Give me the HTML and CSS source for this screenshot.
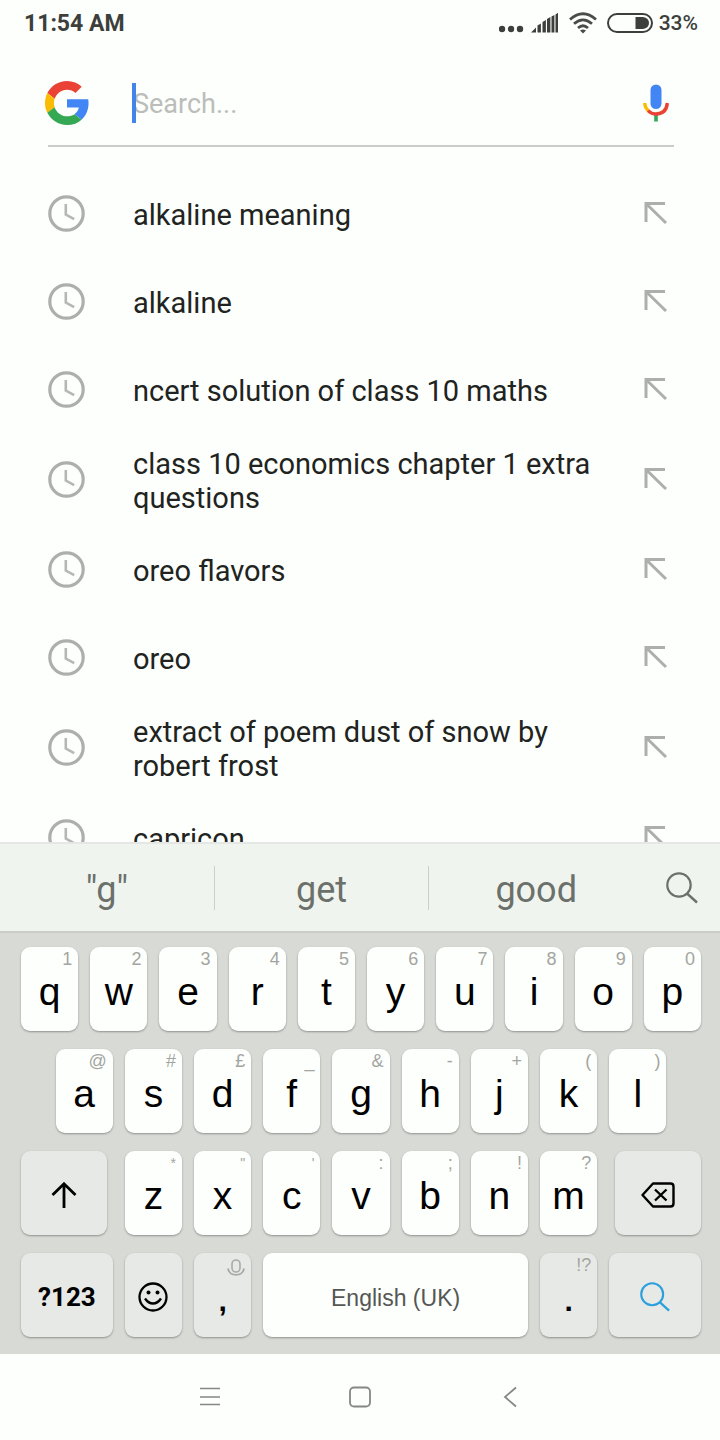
FILE: index.html
```
<!DOCTYPE html>
<html lang="en">

<head>
  <meta charset="UTF-8">
  <meta name="viewport" content="width=device-width, initial-scale=1.0">
  <title>Search</title>
  <link rel="stylesheet" href="styles.css">
</head>

<body>
  <!-- shared icons -->
  <svg class="sprite" aria-hidden="true">
    <symbol id="clock" viewBox="0 0 37 37">
      <circle cx="18.5" cy="18.5" r="16.7" fill="none" stroke="#adafac" stroke-width="3.2" />
      <path d="M17.8 9v10.6l8.4 4.6" fill="none" stroke="#b5b7b4" stroke-width="2.6" />
    </symbol>
    <symbol id="arrow" viewBox="0 0 24 24">
      <path d="M2 21V2.500H21M2.500 3L22 22" fill="none" stroke="#adafac" stroke-width="3" />
    </symbol>
    <symbol id="magnifier" viewBox="0 0 32 32">
      <circle cx="13" cy="13" r="11.700" fill="none" stroke="currentColor" stroke-width="2.200" />
      <path d="M21 21.500L31 30.500" fill="none" stroke="currentColor" stroke-width="2.400" />
    </symbol>
  </svg>

  <div class="phone">
    <header class="status-bar">
      <span class="time">11:54 AM</span>
      <svg class="dots" viewBox="0 0 26 22" width="26" height="22">
        <g fill="#3d3f3d">
          <circle cx="3" cy="17" r="3.200" />
          <circle cx="12" cy="17" r="3.200" />
          <circle cx="21" cy="17" r="3.200" />
        </g>
      </svg>
      <svg class="signal" viewBox="0 0 28 22" width="28" height="22">
        <path d="M0 20.500L5 15.500v5zM6.500 13.500l3.400-2v9H6.500zM11.500 10l3.400-2v12.500h-3.400zM16 7l3.400-2v15.500h-3.400zM20.500 4.500l2.900-1.500v17.500h-2.900zM24.500 2.500l2.500-1.800v19.800h-2.500z" fill="#3d3f3d" />
      </svg>
      <svg class="wifi" viewBox="0 0 28 22" width="28" height="22">
        <g fill="none" stroke="#4a4c4a" stroke-width="2.800">
          <path d="M1 7.500Q14 -4 27 7.500" />
          <path d="M5 11.800Q14 4 23 11.800" />
          <path d="M9 16Q14 11.600 19 16" />
        </g>
        <path d="M11 18.500Q14 16.300 17 18.500L14 21.500z" fill="#4a4c4a" />
      </svg>
      <svg class="battery" viewBox="0 0 46 22" width="46" height="22">
        <rect x="1" y="2" width="44" height="18" rx="9" fill="none" stroke="#3d3f3d" stroke-width="2" />
        <path d="M28.500 5h7.500q6 1 6 6t-6 6h-7.500z" fill="#3d3f3d" />
      </svg>
      <span class="percent">33%</span>
    </header>

    <form class="search-box">
      <span class="side-icon">
        <svg class="logo" viewBox="0 0 48 48" width="44" height="44">
          <path fill="#ea4335" d="M24 9.500c3.540 0 6.710 1.220 9.210 3.600l6.850-6.850C35.900 2.380 30.470 0 24 0 14.620 0 6.510 5.380 2.560 13.220l7.980 6.190C12.430 13.720 17.740 9.500 24 9.500z" />
          <path fill="#4285f4" d="M47.500 20H24v9.020h12.940c-.58 2.960-2.260 5.480-4.780 7.180l7.730 6c4.510-4.180 7.610-10.360 7.610-17.650 0-1.570-.15-3.090-.38-4.550z" />
          <path fill="#fbbc05" d="M10.530 28.590c-.48-1.450-.76-2.990-.76-4.590s.27-3.140.76-4.590l-7.980-6.190C.92 16.460 0 20.120 0 24c0 3.880.92 7.540 2.560 10.780l7.970-6.190z" />
          <path fill="#34a853" d="M24 48c6.480 0 11.930-2.130 15.890-5.810l-7.730-6c-2.150 1.450-4.920 2.300-8.160 2.300-6.260 0-11.570-4.220-13.470-9.910l-7.980 6.190C6.510 42.620 14.620 48 24 48z" />
        </svg>
      </span>
      <div class="search-field">
        <span class="caret"></span>
        <input class="search-input" type="text" placeholder="Search..." aria-label="Search">
      </div>
      <button class="side-icon" type="button" aria-label="Voice search">
        <svg viewBox="0 0 28 38" width="28" height="38">
          <rect x="8.500" y="0.500" width="11" height="24.500" rx="5.500" fill="#4285f4" />
          <path d="M12.200 30h3.600v7.500h-3.600z" fill="#34a853" />
          <path d="M2.700 19q.3 5 3.800 8" fill="none" stroke="#fbbc05" stroke-width="3.400" />
          <path d="M6 26.600Q9.500 30 14 30 24.500 29.500 25.300 19" fill="none" stroke="#ea4335" stroke-width="3.400" />
        </svg>
      </button>
    </form>

    <ul class="history">
      <li class="history-item">
        <svg class="clock"><use href="#clock" /></svg>
        <a class="query" href="#">alkaline meaning</a>
        <button class="side-icon" aria-label="Fill in"><svg class="arrow"><use href="#arrow" /></svg></button>
      </li>
      <li class="history-item">
        <svg class="clock"><use href="#clock" /></svg>
        <a class="query" href="#">alkaline</a>
        <button class="side-icon" aria-label="Fill in"><svg class="arrow"><use href="#arrow" /></svg></button>
      </li>
      <li class="history-item">
        <svg class="clock"><use href="#clock" /></svg>
        <a class="query" href="#">ncert solution of class 10 maths</a>
        <button class="side-icon" aria-label="Fill in"><svg class="arrow"><use href="#arrow" /></svg></button>
      </li>
      <li class="history-item">
        <svg class="clock"><use href="#clock" /></svg>
        <a class="query" href="#">class 10 economics chapter 1 extra questions</a>
        <button class="side-icon" aria-label="Fill in"><svg class="arrow"><use href="#arrow" /></svg></button>
      </li>
      <li class="history-item">
        <svg class="clock"><use href="#clock" /></svg>
        <a class="query" href="#">oreo flavors</a>
        <button class="side-icon" aria-label="Fill in"><svg class="arrow"><use href="#arrow" /></svg></button>
      </li>
      <li class="history-item">
        <svg class="clock"><use href="#clock" /></svg>
        <a class="query" href="#">oreo</a>
        <button class="side-icon" aria-label="Fill in"><svg class="arrow"><use href="#arrow" /></svg></button>
      </li>
      <li class="history-item">
        <svg class="clock"><use href="#clock" /></svg>
        <a class="query" href="#">extract of poem dust of snow by robert frost</a>
        <button class="side-icon" aria-label="Fill in"><svg class="arrow"><use href="#arrow" /></svg></button>
      </li>
      <li class="history-item">
        <svg class="clock"><use href="#clock" /></svg>
        <a class="query" href="#">capricon</a>
        <button class="side-icon" aria-label="Fill in"><svg class="arrow"><use href="#arrow" /></svg></button>
      </li>
    </ul>

    <div class="suggestions">
      <button class="word">"g"</button>
      <button class="word">get</button>
      <button class="word">good</button>
      <button class="find" aria-label="Search"><svg width="32" height="32"><use href="#magnifier" /></svg></button>
    </div>

    <div class="keyboard">
      <button class="key"><span class="hint">1</span>q</button>
      <button class="key"><span class="hint">2</span>w</button>
      <button class="key"><span class="hint">3</span>e</button>
      <button class="key"><span class="hint">4</span>r</button>
      <button class="key"><span class="hint">5</span>t</button>
      <button class="key"><span class="hint">6</span>y</button>
      <button class="key"><span class="hint">7</span>u</button>
      <button class="key"><span class="hint">8</span>i</button>
      <button class="key"><span class="hint">9</span>o</button>
      <button class="key"><span class="hint">0</span>p</button>

      <button class="key indent"><span class="hint">@</span>a</button>
      <button class="key"><span class="hint">#</span>s</button>
      <button class="key"><span class="hint">£</span>d</button>
      <button class="key"><span class="hint">_</span>f</button>
      <button class="key"><span class="hint">&amp;</span>g</button>
      <button class="key"><span class="hint">-</span>h</button>
      <button class="key"><span class="hint">+</span>j</button>
      <button class="key"><span class="hint">(</span>k</button>
      <button class="key"><span class="hint">)</span>l</button>

      <button class="key gray shift" aria-label="Shift">
        <svg viewBox="0 0 26 26" width="26" height="26">
          <path d="M13 26V2M1.500 13L13 1.800 24.500 13" fill="none" stroke="#000" stroke-width="2.800" />
        </svg>
      </button>
      <button class="key"><span class="hint small">*</span>z</button>
      <button class="key"><span class="hint small">"</span>x</button>
      <button class="key"><span class="hint small">'</span>c</button>
      <button class="key"><span class="hint">:</span>v</button>
      <button class="key"><span class="hint">;</span>b</button>
      <button class="key"><span class="hint">!</span>n</button>
      <button class="key"><span class="hint">?</span>m</button>
      <button class="key gray backspace" aria-label="Backspace">
        <svg viewBox="0 0 34 26" width="34" height="26">
          <path d="M12 1.500H29.500Q32.500 1.500 32.500 4.500V21.500Q32.500 24.500 29.500 24.500H12L1.500 13z" fill="none" stroke="#000" stroke-width="2.400" stroke-linejoin="round" />
          <path d="M14 7.500L25.500 18.500M25.500 7.500L14 18.500" fill="none" stroke="#000" stroke-width="2.400" />
        </svg>
      </button>

      <button class="key gray wide symbols">?123</button>
      <button class="key gray" aria-label="Emoji">
        <svg viewBox="0 0 30 30" width="30" height="30">
          <circle cx="15" cy="15" r="13.500" fill="none" stroke="#000" stroke-width="2.300" />
          <circle cx="10.500" cy="10.500" r="2" />
          <circle cx="19.500" cy="10.500" r="2" />
          <path d="M7 16.500Q10.500 21.500 15 21.500T23 16.500" fill="none" stroke="#000" stroke-width="2.400" />
        </svg>
      </button>
      <button class="key gray punct" aria-label="Comma">
        <span class="hint">
          <svg viewBox="0 0 18 17" width="18" height="17">
            <rect x="5" y="1" width="8" height="12" rx="4" fill="none" stroke="#a9aba8" stroke-width="1.600" />
            <path d="M1 9.500Q2 15.800 9 15.800T17 9.500" fill="none" stroke="#a9aba8" stroke-width="1.800" />
          </svg>
        </span>,
      </button>
      <button class="key space">English (UK)</button>
      <button class="key gray punct"><span class="hint">!?</span>.</button>
      <button class="key gray wide enter" aria-label="Search"><svg width="30" height="30"><use href="#magnifier" /></svg></button>
    </div>

    <nav class="nav-bar">
      <button aria-label="Menu">
        <svg viewBox="0 0 22 22" width="22" height="22">
          <path d="M1 2.500H21M1 11H21M1 18.500H21" stroke="#858785" stroke-width="1.600" />
        </svg>
      </button>
      <button aria-label="Home">
        <svg viewBox="0 0 22 22" width="22" height="22">
          <rect x="1" y="1.500" width="20" height="19" rx="4" fill="none" stroke="#858785" stroke-width="1.800" />
        </svg>
      </button>
      <button aria-label="Back">
        <svg viewBox="0 0 22 22" width="22" height="22">
          <path d="M17 1.500L6 11 17 20.500" fill="none" stroke="#858785" stroke-width="1.800" />
        </svg>
      </button>
    </nav>
  </div>
</body>

</html>
```
FILE: styles.css
```
* {
  box-sizing: border-box;
}

body {
  margin: 0;
  font-family: Roboto, sans-serif;
  background-color: #fdfffc;
  color: #212321;
}

button {
  margin: 0;
  padding: 0;
  border: none;
  background: none;
  font-family: inherit;
  color: inherit;
  cursor: pointer;
}

svg {
  display: block;
  flex-shrink: 0;
}

.sprite {
  position: absolute;
  width: 0;
  height: 0;
}

.phone {
  display: flex;
  flex-direction: column;
  height: 100vh;
}

/* status bar */
.status-bar {
  display: flex;
  align-items: center;
  gap: 6px;
  height: 46px;
  padding: 0 22px 0 24px;
  font-size: 23px;
  font-weight: 700;
  color: #3d3f3d;
}

.time {
  margin-right: auto;
}

.wifi {
  margin: 0 4px;
}

.percent {
  font-size: 21px;
  font-weight: 500;
}

/* search box */
.search-box {
  display: flex;
  align-items: center;
  gap: 48px;
  height: 101px;
  margin: 0 46px 0 48px;
  padding-bottom: 14px;
  padding-top: 28px;
  border-bottom: 2px solid #c9ccc8;
}

.side-icon {
  display: flex;
  justify-content: center;
  align-items: center;
  flex: 0 0 37px;
  min-width: 0;
}

.search-field {
  position: relative;
  flex: 1;
}

.search-input {
  display: block;
  width: 100%;
  height: 40px;
  padding: 2px 0 0;
  border: none;
  outline: none;
  background: none;
  font-family: inherit;
  font-size: 27px;
}

.search-input::placeholder {
  color: #bbbdba;
}

.caret {
  position: absolute;
  top: 0;
  left: -1px;
  width: 4px;
  height: 40px;
  background-color: #4285e8;
}

/* search history */
.history {
  flex: 1;
  min-height: 0;
  overflow: hidden;
  margin: 0;
  padding: 22px 46px 0 48px;
  list-style: none;
}

.history-item {
  display: flex;
  align-items: center;
  min-height: 88px;
  padding: 10px 0;
}

.clock {
  width: 37px;
  height: 37px;
}

.arrow {
  width: 24px;
  height: 24px;
}

.query {
  flex: 1;
  padding: 4px 16px 0 48px;
  font-size: 29px;
  line-height: 34px;
  color: inherit;
  text-decoration: none;
}

/* word suggestions */
.suggestions {
  display: flex;
  align-items: center;
  height: 89px;
  background-color: #eff4ef;
  border-top: 2px solid #e4e7e3;
  color: #6b706a;
}

.word {
  flex: 1;
  height: 44px;
  padding-top: 4px;
  font-size: 36px;
  line-height: 40px;
}

.word + .word {
  border-left: 1px solid #ccd0cb;
}

.find {
  display: flex;
  justify-content: center;
  flex: 0 0 77px;
}

/* keyboard */
.keyboard {
  display: grid;
  grid-template-columns: repeat(20, 1fr);
  grid-auto-rows: 84px;
  gap: 18px 12px;
  padding: 14px 19px 17px 21px;
  background-color: #d7dad5;
  border-top: 2px solid #cacdc8;
}

.key {
  position: relative;
  display: flex;
  justify-content: center;
  align-items: center;
  grid-column: span 2;
  min-width: 0;
  padding-top: 6px;
  border-radius: 9px;
  background-color: #fdfffc;
  box-shadow: 0 1px 2px #8f928e;
  font-family: "Liberation Sans", Arial, sans-serif;
  font-size: 39px;
  color: #000;
}

.gray {
  padding-top: 4px;
  background-color: #e7e9e6;
}

.indent {
  grid-column: 2 / span 2;
}

.shift {
  grid-column: 1 / span 3;
  margin-right: 6px;
}

.backspace {
  grid-column: span 3;
  margin-left: 6px;
}

.wide {
  grid-column: span 3;
}

.symbols {
  font-family: Roboto, sans-serif;
  font-size: 26px;
  font-weight: 700;
}

.space {
  grid-column: span 8;
  font-size: 23px;
  color: #555755;
}

.punct {
  padding-top: 12px;
  font-size: 30px;
  font-weight: 700;
}

.enter {
  color: #2ba0dd;
}

.hint {
  position: absolute;
  top: 2px;
  right: 6px;
  font-size: 18px;
  line-height: 20px;
  font-weight: 400;
  color: #a3a5a2;
}

.punct svg {
  margin-top: 4px;
}

.small {
  font-size: 14px;
}

/* system navigation */
.nav-bar {
  display: flex;
  justify-content: center;
  align-items: center;
  gap: 128px;
  height: 86px;
}
```
